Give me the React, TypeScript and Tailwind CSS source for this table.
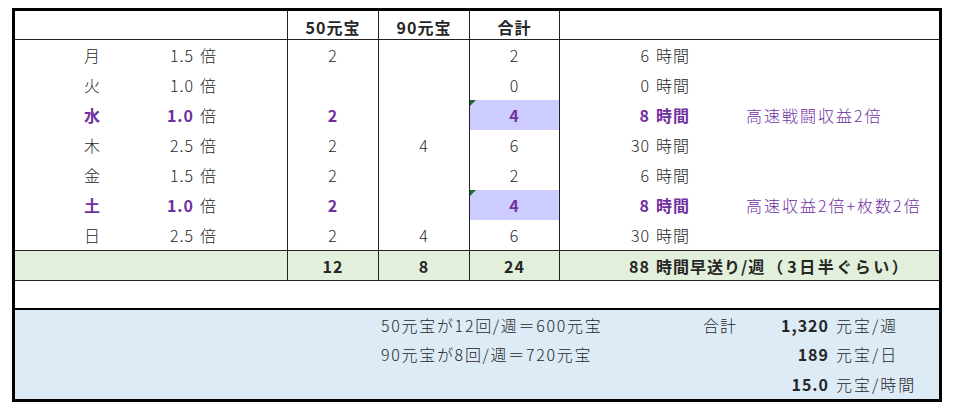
import React from 'react';

type Row = {
    day: string;
    rate: string;
    c50: string;
    c90: string;
    total: string;
    hours: string;
    note?: string;
    hl?: boolean;
};

const rows: Row[] = [
    { day: '月', rate: '1.5', c50: '2', c90: '', total: '2', hours: '6' },
    { day: '火', rate: '1.0', c50: '', c90: '', total: '0', hours: '0' },
    { day: '水', rate: '1.0', c50: '2', c90: '', total: '4', hours: '8', note: '高速戦闘収益2倍', hl: true },
    { day: '木', rate: '2.5', c50: '2', c90: '4', total: '6', hours: '30' },
    { day: '金', rate: '1.5', c50: '2', c90: '', total: '2', hours: '6' },
    { day: '土', rate: '1.0', c50: '2', c90: '', total: '4', hours: '8', note: '高速収益2倍+枚数2倍', hl: true },
    { day: '日', rate: '2.5', c50: '2', c90: '4', total: '6', hours: '30' },
];

const font = { fontFamily: '"Noto Sans CJK JP", "Noto Sans", sans-serif' };

const App: React.FC = () => {
    return (
        <div
            className="w-[954px] h-[414px] bg-white pt-[8px] pl-[12px] text-[16px] tracking-[1px] text-[#262626]"
            style={font}
        >
            <div className="w-[930px] h-[394px] border-[3px] border-black flex flex-col">
                {/* header */}
                <div className="flex h-[29px] border-b border-[#222] font-bold">
                    <div className="w-[273px] border-r border-[#222]" />
                    <div className="w-[91px] border-r border-[#222] flex items-center justify-center pt-[3px]">50元宝</div>
                    <div className="w-[91px] border-r border-[#222] flex items-center justify-center pt-[3px]">90元宝</div>
                    <div className="w-[90px] border-r border-[#222] flex items-center justify-center pt-[3px]">合計</div>
                    <div className="flex-1" />
                </div>

                {/* days */}
                {rows.map((r) => {
                    const c = r.hl ? 'text-[#7030a0] font-bold' : 'font-light';
                    return (
                        <div key={r.day} className="flex h-[30px]">
                            <div className="w-[273px] border-r border-[#222] flex items-center">
                                <span className={`w-[145px] pl-[10px] text-center ${c}`}>{r.day}</span>
                                <span className={`w-[34px] text-right ${c}`}>{r.rate}</span>
                                <span className="pl-[6px] font-light">倍</span>
                            </div>
                            <div className={`w-[91px] border-r border-[#222] flex items-center justify-center ${c}`}>{r.c50}</div>
                            <div className={`w-[91px] border-r border-[#222] flex items-center justify-center ${c}`}>{r.c90}</div>
                            <div className={`relative w-[90px] border-r border-[#222] flex items-center justify-center ${c} ${r.hl ? 'bg-[#ccccff]' : ''}`}>
                                {r.total}
                                {r.hl && (
                                    <span className="absolute left-0 top-0 w-0 h-0 border-t-[6px] border-r-[6px] border-t-[#1e6b32] border-r-transparent" />
                                )}
                            </div>
                            <div className="flex-1 flex items-center">
                                <span className={`w-[90px] text-right ${c}`}>{r.hours}</span>
                                <span className={`w-[96px] pl-[6px] ${c}`}>時間</span>
                                <span className="text-[#7030a0] font-light tracking-[2px]">{r.note}</span>
                            </div>
                        </div>
                    );
                })}

                {/* totals */}
                <div className="flex h-[31px] border-t border-b border-[#222] bg-[#e2efda] font-bold">
                    <div className="w-[273px] border-r border-[#222]" />
                    <div className="w-[91px] border-r border-[#222] flex items-center justify-center">12</div>
                    <div className="w-[91px] border-r border-[#222] flex items-center justify-center">8</div>
                    <div className="w-[90px] border-r border-[#222] flex items-center justify-center">24</div>
                    <div className="flex-1 flex items-center whitespace-nowrap">
                        <span className="w-[90px] text-right">88</span>
                        <span className="pl-[6px]">時間早送り/週</span>
                        <span className="inline-block w-[22px] text-right pr-[3px]">（</span>
                        <span className="tracking-[2.5px]">3日半ぐらい</span>
                        <span className="inline-block w-[18px] text-left">）</span>
                    </div>
                </div>

                <div className="h-[29px] border-b-2 border-black" />

                {/* summary */}
                <div className="flex-1 bg-[#ddebf7] grid grid-rows-3 font-light">
                    <div className="flex items-center">
                        <span className="w-[366px]" />
                        <span className="w-[322px] tracking-[1.7px]">50元宝が12回/週＝600元宝</span>
                        <span className="w-[34px]">合計</span>
                        <span className="w-[92px] font-bold text-right">1,320</span>
                        <span className="pl-[7px] tracking-[2px]">元宝/週</span>
                    </div>
                    <div className="flex items-center">
                        <span className="w-[366px]" />
                        <span className="w-[322px] tracking-[1.7px]">90元宝が8回/週＝720元宝</span>
                        <span className="w-[126px] font-bold text-right">189</span>
                        <span className="pl-[7px] tracking-[2px]">元宝/日</span>
                    </div>
                    <div className="flex items-center">
                        <span className="w-[688px]" />
                        <span className="w-[126px] font-bold text-right">15.0</span>
                        <span className="pl-[7px] tracking-[2px]">元宝/時間</span>
                    </div>
                </div>
            </div>
        </div>
    );
};

export default App;
